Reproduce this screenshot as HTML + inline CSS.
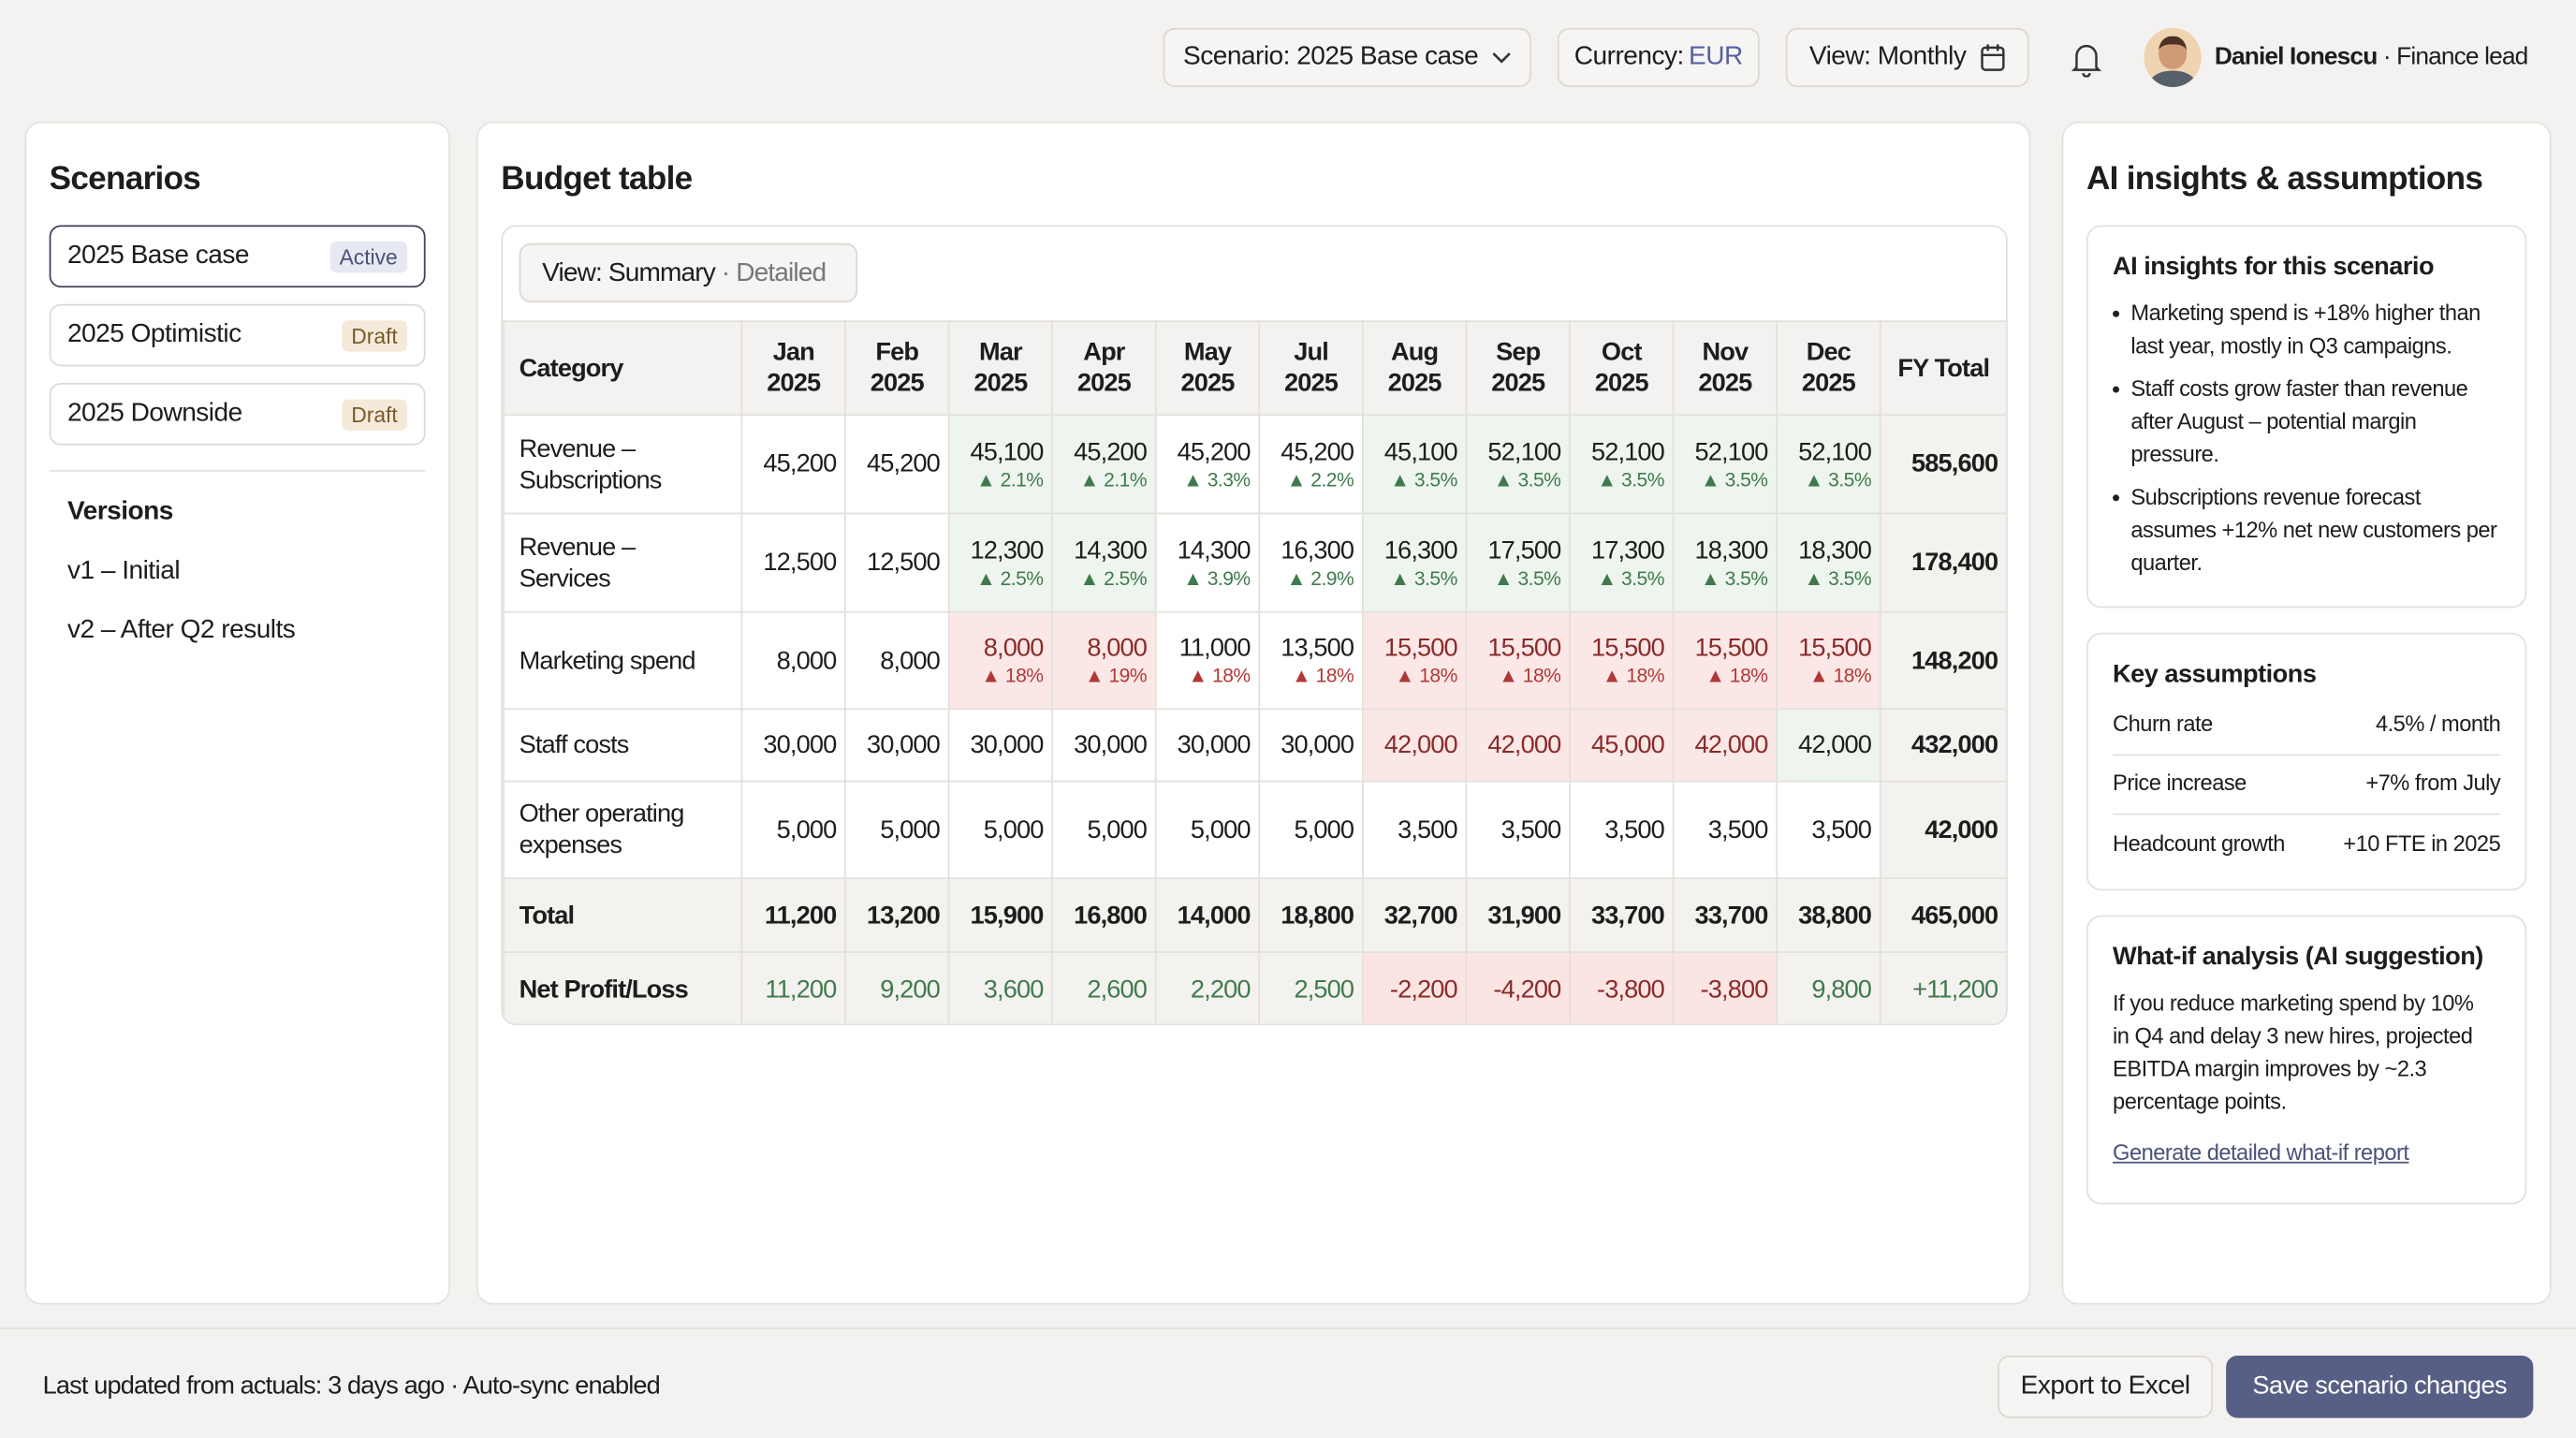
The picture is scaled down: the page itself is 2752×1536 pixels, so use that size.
<!DOCTYPE html>
<html><head><meta charset="utf-8"><style>
*{box-sizing:border-box;margin:0;padding:0}
html,body{width:2752px;height:1536px;overflow:hidden;background:#f3f2f0}
#s{position:absolute;left:0;top:0;width:1568px;height:875px;transform:scale(1.7551);transform-origin:0 0;font-family:"Liberation Sans Narrow","Liberation Sans",sans-serif;color:#1d1d1d;font-size:16px;letter-spacing:-0.3px}
.a{position:absolute}
.btn{position:absolute;top:17px;height:36px;border:1px solid #dcd8d3;border-radius:7px;background:#f6f5f3;display:flex;align-items:center;justify-content:center;font-size:16px;white-space:nowrap;gap:8px}
.panel{position:absolute;top:74px;height:720px;background:#fff;border:1px solid #e5e2de;border-radius:10px}
h2{position:absolute;font-size:20px;font-weight:bold;letter-spacing:-.4px}
.sc{position:absolute;left:14px;width:229px;height:38px;border:1px solid #dedad5;border-radius:7px;display:flex;align-items:center;justify-content:space-between;padding:0 10px;font-size:16px}
.tag{font-size:13px;padding:2px 6px;border-radius:4px;background:#f5ead9;color:#7a5a2a;letter-spacing:0}
.tag.act{background:#e7e9f2;color:#4a5278}
table{border-collapse:collapse;position:absolute;left:0;top:57px;width:915px;table-layout:fixed}
td,th{border:1px solid #e3e0dc;text-align:right;padding:0 5px 0 0;font-weight:normal;font-size:15.5px;white-space:nowrap;line-height:19px;letter-spacing:-0.5px}
th{background:#f3f2f0;font-weight:bold;text-align:center;padding:0}
td.c,th.c{text-align:left;padding-left:9px;white-space:normal}
td small{display:block;font-size:12px;line-height:15px;color:#3f7a4c;letter-spacing:-0.3px}
td.r small{color:#b23838}
.g{background:#eef5ee}.r{background:#fbe8e6;color:#8a2a2a}
.t td{background:#f3f2ef;font-weight:bold}
.np td{background:#f3f2ef;color:#3f7a4c}
.np td.r{background:#fbe5e3;color:#8a2a2a}
.np td.c{color:#1d1d1d;font-weight:bold}
.fy{font-weight:bold;background:#f3f2ef}
.card{position:absolute;left:14px;width:268px;border:1px solid #e3e0dc;border-radius:9px;padding:0 15px;font-family:"Liberation Sans",sans-serif;font-size:13.5px;line-height:20px;letter-spacing:-0.3px}
.card h3{font-size:15.5px;margin-top:15px;margin-bottom:8px}
.card li{list-style:none;position:relative;padding-left:11px;margin-bottom:6px}
.card li:before{content:"";position:absolute;left:0;top:8px;width:4px;height:4px;border-radius:50%;background:#222}
.kv{display:flex;justify-content:space-between;height:36.5px;align-items:center;border-bottom:1px solid #e5e2de}
</style></head><body><div id="s">
<div class="btn" style="left:708px;width:224px">Scenario: 2025 Base case <svg width="12" height="8" viewBox="0 0 12 8"><path d="M1 1.5l5 5 5-5" fill="none" stroke="#333" stroke-width="1.5"/></svg></div>
<div class="btn" style="left:948px;width:123px">Currency:<span style="color:#5660a0;margin-left:-5px">EUR</span></div>
<div class="btn" style="left:1087px;width:148px">View: Monthly <svg width="16" height="18" viewBox="0 0 16 18"><rect x="1.5" y="3" width="13" height="13.5" rx="2" fill="none" stroke="#333" stroke-width="1.4"/><path d="M1.5 7.5h13M5 1v4M11 1v4" stroke="#333" stroke-width="1.4"/></svg></div>
<svg class="a" style="left:1260px;top:25px" width="20" height="22" viewBox="0 0 20 22"><path d="M4 16V9a6 6 0 0112 0v7l1.5 1.5h-15z" fill="none" stroke="#333" stroke-width="1.4"/><path d="M8 19.5a2 2 0 004 0" fill="none" stroke="#333" stroke-width="1.4"/></svg>
<div class="a" style="left:1305px;top:17px;width:35px;height:36px;border-radius:50%;background:#f0d3b0;overflow:hidden"><div class="a" style="left:9px;top:5px;width:17px;height:20px;border-radius:45%;background:#d09a78;border-top:5px solid #4a3225"></div><div class="a" style="left:4px;top:26px;width:27px;height:14px;border-radius:50% 50% 0 0;background:#55606a"></div></div>
<div class="a" style="left:1348px;top:26px;font-size:15px;white-space:nowrap;letter-spacing:-0.5px"><b>Daniel Ionescu</b> · Finance lead</div>

<div class="panel" style="left:15px;width:259px">
<h2 style="left:14px;top:23px">Scenarios</h2>
<div class="sc" style="top:62px;border:1.5px solid #3d4256">2025 Base case<span class="tag act">Active</span></div>
<div class="sc" style="top:110px">2025 Optimistic<span class="tag">Draft</span></div>
<div class="sc" style="top:158px">2025 Downside<span class="tag">Draft</span></div>
<div class="a" style="left:14px;top:211px;width:229px;height:1px;background:#e5e2de"></div>
<div class="a" style="left:25px;top:228px;font-size:16px;font-weight:bold">Versions</div>
<div class="a" style="left:25px;top:264px;font-size:16px">v1 – Initial</div>
<div class="a" style="left:25px;top:300px;font-size:16px">v2 – After Q2 results</div>
</div>

<div class="panel" style="left:290px;width:946px">
<h2 style="left:14px;top:23px">Budget table</h2>
<div class="a" style="left:14px;top:62px;width:917px;height:487px;border:1px solid #e3e0dc;border-radius:9px;overflow:hidden">
<div class="a" style="left:10px;top:10px;width:206px;height:36px;border:1px solid #dcd8d3;border-radius:7px;background:#f6f5f3;font-size:16px;padding:9px 13px;white-space:nowrap;letter-spacing:-0.5px">View: Summary <span style="color:#777">· Detailed</span></div>
<table>
<colgroup><col style="width:145px"><col span="11" style="width:63px"><col style="width:77px"></colgroup>
<tr style="height:57px"><th class="c">Category</th><th>Jan<br>2025</th><th>Feb<br>2025</th><th>Mar<br>2025</th><th>Apr<br>2025</th><th>May<br>2025</th><th>Jul<br>2025</th><th>Aug<br>2025</th><th>Sep<br>2025</th><th>Oct<br>2025</th><th>Nov<br>2025</th><th>Dec<br>2025</th><th>FY Total</th></tr>
<tr style="height:60px"><td class="c">Revenue –<br>Subscriptions</td><td>45,200</td><td>45,200</td><td class="g">45,100<small>▲ 2.1%</small></td><td class="g">45,200<small>▲ 2.1%</small></td><td>45,200<small>▲ 3.3%</small></td><td>45,200<small>▲ 2.2%</small></td><td class="g">45,100<small>▲ 3.5%</small></td><td class="g">52,100<small>▲ 3.5%</small></td><td class="g">52,100<small>▲ 3.5%</small></td><td class="g">52,100<small>▲ 3.5%</small></td><td class="g">52,100<small>▲ 3.5%</small></td><td class="fy">585,600</td></tr>
<tr style="height:60px"><td class="c">Revenue –<br>Services</td><td>12,500</td><td>12,500</td><td class="g">12,300<small>▲ 2.5%</small></td><td class="g">14,300<small>▲ 2.5%</small></td><td>14,300<small>▲ 3.9%</small></td><td>16,300<small>▲ 2.9%</small></td><td class="g">16,300<small>▲ 3.5%</small></td><td class="g">17,500<small>▲ 3.5%</small></td><td class="g">17,300<small>▲ 3.5%</small></td><td class="g">18,300<small>▲ 3.5%</small></td><td class="g">18,300<small>▲ 3.5%</small></td><td class="fy">178,400</td></tr>
<tr style="height:59px"><td class="c">Marketing spend</td><td>8,000</td><td>8,000</td><td class="r">8,000<small>▲ 18%</small></td><td class="r">8,000<small>▲ 19%</small></td><td class="r" style="background:#fff;color:#1d1d1d">11,000<small>▲ 18%</small></td><td class="r" style="background:#fff;color:#1d1d1d">13,500<small>▲ 18%</small></td><td class="r">15,500<small>▲ 18%</small></td><td class="r">15,500<small>▲ 18%</small></td><td class="r">15,500<small>▲ 18%</small></td><td class="r">15,500<small>▲ 18%</small></td><td class="r">15,500<small>▲ 18%</small></td><td class="fy">148,200</td></tr>
<tr style="height:44px"><td class="c">Staff costs</td><td>30,000</td><td>30,000</td><td>30,000</td><td>30,000</td><td>30,000</td><td>30,000</td><td class="r">42,000</td><td class="r">42,000</td><td class="r">45,000</td><td class="r">42,000</td><td class="g">42,000</td><td class="fy">432,000</td></tr>
<tr style="height:59px"><td class="c">Other operating expenses</td><td>5,000</td><td>5,000</td><td>5,000</td><td>5,000</td><td>5,000</td><td>5,000</td><td>3,500</td><td>3,500</td><td>3,500</td><td>3,500</td><td>3,500</td><td class="fy">42,000</td></tr>
<tr class="t" style="height:45px"><td class="c">Total</td><td>11,200</td><td>13,200</td><td>15,900</td><td>16,800</td><td>14,000</td><td>18,800</td><td>32,700</td><td>31,900</td><td>33,700</td><td>33,700</td><td>38,800</td><td>465,000</td></tr>
<tr class="np" style="height:45px"><td class="c">Net Profit/Loss</td><td>11,200</td><td>9,200</td><td>3,600</td><td>2,600</td><td>2,200</td><td>2,500</td><td class="r">-2,200</td><td class="r">-4,200</td><td class="r">-3,800</td><td class="r">-3,800</td><td>9,800</td><td>+11,200</td></tr>
</table></div>
</div>

<div class="panel" style="left:1255px;width:298px">
<h2 style="left:14px;top:23px">AI insights &amp; assumptions</h2>
<div class="card" style="top:62px;height:233px"><h3>AI insights for this scenario</h3><ul>
<li>Marketing spend is +18% higher than last year, mostly in Q3 campaigns.</li>
<li>Staff costs grow faster than revenue after August – potential margin pressure.</li>
<li>Subscriptions revenue forecast assumes +12% net new customers per quarter.</li></ul></div>
<div class="card" style="top:310px;height:157px"><h3 style="margin-bottom:2px">Key assumptions</h3>
<div class="kv"><span>Churn rate</span><span>4.5% / month</span></div>
<div class="kv"><span>Price increase</span><span>+7% from July</span></div>
<div class="kv" style="border:0"><span>Headcount growth</span><span>+10 FTE in 2025</span></div></div>
<div class="card" style="top:482px;height:176px"><h3>What-if analysis (AI suggestion)</h3>
<p style="padding-right:6px">If you reduce marketing spend by 10% in Q4 and delay 3 new hires, projected EBITDA margin improves by ~2.3 percentage points.</p>
<p style="margin-top:11px;color:#4a5278;text-decoration:underline">Generate detailed what-if report</p></div>
</div>

<div class="a" style="left:0;top:808px;width:1568px;height:1px;background:#e3e0dc"></div>
<div class="a" style="left:26px;top:835px;font-size:15.5px;letter-spacing:-0.5px">Last updated from actuals: 3 days ago · Auto-sync enabled</div>
<div class="btn" style="left:1216px;top:825px;width:131px;height:38px">Export to Excel</div>
<div class="btn" style="left:1355px;top:825px;width:187px;height:38px;background:#575f86;color:#fff;border-color:#575f86;font-size:15.5px">Save scenario changes</div>
</div></body></html>
